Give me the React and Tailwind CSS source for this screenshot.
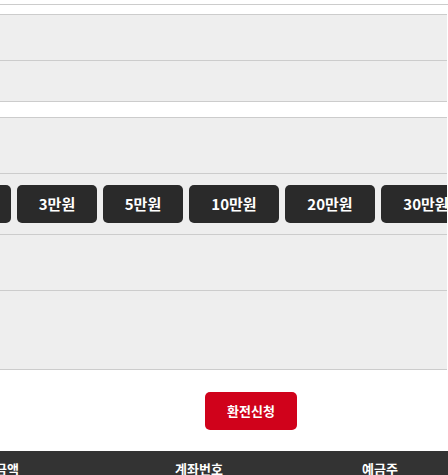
import React from 'react';

const amounts = [
  { label: '1만원', w: 'w-[80px]' },
  { label: '3만원', w: 'w-[80px]' },
  { label: '5만원', w: 'w-[80px]' },
  { label: '10만원', w: 'w-[90px]' },
  { label: '20만원', w: 'w-[90px]' },
  { label: '30만원', w: 'w-[90px]' },
  { label: '50만원', w: 'w-[90px]' },
];

const Row = ({ h, children }) => (
  <div className={`${h} border-b border-[#cccccc] bg-[#eeeeee] flex items-center`}>{children}</div>
);

const App = () => {
  return (
    <div
      className="w-[448px] h-[475px] overflow-hidden bg-white"
      style={{ fontFamily: '"Noto Sans CJK KR", "Noto Sans", sans-serif' }}
    >
      <div className="h-[4px]" />
      <div className="h-[10px] border-t border-[#cccccc]" />

      {/* 정보 테이블 */}
      <div className="w-[447px] border-t border-[#cccccc]">
        <Row h="h-[46px]" />
        <Row h="h-[41px]" />
      </div>

      <div className="h-[15px]" />

      {/* 환전 입력 테이블 */}
      <div className="w-[447px] border-t border-[#cccccc]">
        <Row h="h-[56px]" />
        <div className="h-[61px] border-b border-[#cccccc] bg-[#eeeeee] overflow-hidden pt-[11px]">
          <div className="flex gap-[6px] ml-[-69px]">
            {amounts.map((a) => (
              <button
                key={a.label}
                type="button"
                className={`${a.w} shrink-0 h-[38px] rounded-[5px] bg-[#2a2a2a] text-white text-[15px] font-bold`}
              >
                {a.label}
              </button>
            ))}
          </div>
        </div>
        <Row h="h-[56px]" />
        <Row h="h-[79px]" />
      </div>

      {/* 신청 버튼 */}
      <div className="h-[81px] flex items-center justify-center pl-[54px] pt-[1px]">
        <button
          type="button"
          className="w-[92px] h-[38px] rounded-[5px] bg-[#d0021b] text-white text-[13px] font-bold"
        >
          환전신청
        </button>
      </div>

      {/* 계좌 목록 헤더 */}
      <div className="h-[36px] bg-[#333333] text-white text-[13px] font-bold relative">
        <span className="absolute left-[-17px] top-[8px]">입금액</span>
        <span className="absolute left-[175px] top-[8px]">계좌번호</span>
        <span className="absolute left-[362px] top-[8px]">예금주</span>
      </div>
    </div>
  );
};

export default App;
